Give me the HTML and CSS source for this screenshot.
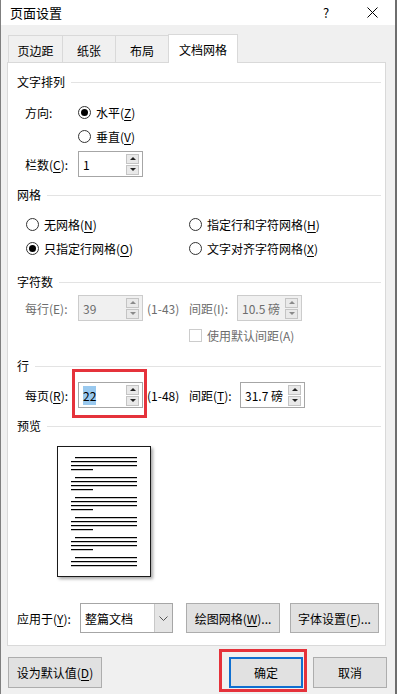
FILE: index.html
```html
<!DOCTYPE html>
<html lang="zh-CN">
<head>
    <meta charset="UTF-8">
    <meta name="viewport" content="width=device-width, initial-scale=1.0">
    <title>页面设置</title>
    <link rel="stylesheet" href="styles.css">
</head>
<body>
<div class="window">
    <div class="titlebar">
        <span class="title">页面设置</span>
        <span class="help">?</span>
        <svg class="close" width="11" height="11" viewBox="0 0 11 11"><path d="M0.5 0.5 L10.5 10.5 M10.5 0.5 L0.5 10.5" stroke="#000" stroke-width="1"/></svg>
    </div>

    <div class="tabs">
        <div class="tab t1">页边距</div>
        <div class="tab t2">纸张</div>
        <div class="tab t3">布局</div>
        <div class="tab t4 active">文档网格</div>
    </div>

    <div class="panel">
        <div class="hdr">文字排列</div>
        <div class="row r-dir">
            <span class="lbl">方向:</span>
            <span class="radio on"></span><span>水平(<u>Z</u>)</span>
        </div>
        <div class="row r-dir2">
            <span class="lbl"></span>
            <span class="radio"></span><span>垂直(<u>V</u>)</span>
        </div>
        <div class="row r-cols">
            <span class="lbl">栏数(<u>C</u>):</span>
            <div class="spin"><span class="val">1</span><span class="btns"><span class="sb"><i class="up"></i></span><span class="sb"><i class="dn"></i></span></span></div>
        </div>

        <div class="hdr h-grid">网格</div>
        <div class="grid-opts">
            <div class="opt"><span class="radio"></span><span>无网格(<u>N</u>)</span></div>
            <div class="opt"><span class="radio"></span><span>指定行和字符网格(<u>H</u>)</span></div>
            <div class="opt"><span class="radio on"></span><span>只指定行网格(<u>O</u>)</span></div>
            <div class="opt"><span class="radio"></span><span>文字对齐字符网格(<u>X</u>)</span></div>
        </div>

        <div class="hdr h-chars">字符数</div>
        <div class="row r-chars dim">
            <span class="lbl">每行(E):</span>
            <div class="spin off"><span class="val">39</span><span class="btns"><span class="sb"><i class="up"></i></span><span class="sb"><i class="dn"></i></span></span></div>
            <span class="range">(1-43)</span>
            <span class="lbl2">间距(I):</span>
            <div class="spin off"><span class="val">10.5 磅</span><span class="btns"><span class="sb"><i class="up"></i></span><span class="sb"><i class="dn"></i></span></span></div>
        </div>
        <div class="row r-check dim">
            <span class="check"></span><span>使用默认间距(A)</span>
        </div>

        <div class="hdr h-lines">行</div>
        <div class="row r-lines">
            <span class="lbl">每页(<u>R</u>):</span>
            <div class="spin marked"><span class="val"><span class="sel">22</span></span><span class="btns"><span class="sb"><i class="up"></i></span><span class="sb"><i class="dn"></i></span></span></div>
            <span class="range">(1-48)</span>
            <span class="lbl2 wide">间距(<u>T</u>):</span>
            <div class="spin"><span class="val">31.7 磅</span><span class="btns"><span class="sb"><i class="up"></i></span><span class="sb"><i class="dn"></i></span></span></div>
        </div>

        <div class="hdr h-prev">预览</div>
        <div class="preview">
            <div class="page">
                <div class="para"><b class="first"></b><b></b><b></b><b class="short"></b></div>
                <div class="para"><b class="first"></b><b></b><b></b><b class="short"></b></div>
                <div class="para"><b class="first"></b><b></b><b></b><b class="short"></b></div>
                <div class="para"><b class="first"></b><b></b><b></b><b class="short"></b></div>
                <div class="para"><b class="first"></b><b></b><b></b><b class="short"></b></div>
                <div class="para"><b class="first"></b><b></b><b></b></div>
            </div>
        </div>

        <div class="apply">
            <span class="lbl3">应用于(<u>Y</u>):</span>
            <div class="select">
                <span class="val">整篇文档</span>
                <span class="drop"><svg width="9" height="5" viewBox="0 0 9 5"><path d="M0.5 0.5 L4.5 4.5 L8.5 0.5" fill="none" stroke="#555" stroke-width="1"/></svg></span>
            </div>
            <div class="btn b-grid">绘图网格(<u>W</u>)...</div>
            <div class="btn b-font">字体设置(<u>F</u>)...</div>
        </div>
    </div>

    <div class="footer">
        <div class="btn b-default">设为默认值(<u>D</u>)</div>
        <div class="spacer"></div>
        <div class="btn b-ok">确定</div>
        <div class="btn b-cancel">取消</div>
    </div>
</div>
</body>
</html>
```

FILE: styles.css
```css
* {
    box-sizing: border-box;
}

body {
    margin: 0;
    background: #ffffff;
    font-family: "Noto Sans CJK SC", "Noto Sans", sans-serif;
    font-size: 12px;
    color: #000;
}

u {
    text-decoration: underline;
    text-underline-offset: 2px;
}

.window {
    width: 397px;
    height: 694px;
    background: #f0f0f0;
    border-left: 1px solid #7f7f7f;
    border-right: 2px solid #6e6e6e;
}

/* barre de titre */
.titlebar {
    height: 25px;
    background: #ffffff;
    display: flex;
    align-items: center;
    padding-left: 9px;
}

.title {
    font-size: 13px;
    flex: 1;
}

.help {
    font-size: 13px;
    width: 44px;
}

.close {
    margin-right: 17px;
}

/* onglets */
.tabs {
    display: flex;
    align-items: flex-end;
    padding: 9px 0 0 7px;
}

.tab {
    height: 27px;
    border: 1px solid #d9d9d9;
    border-bottom: none;
    margin-right: -1px;
    display: flex;
    align-items: center;
    justify-content: center;
    font-size: 12px;
    padding-top: 2px;
}

.t1 { width: 55px; }
.t2 { width: 54px; }
.t3 { width: 54px; }

.t4 {
    width: 70px;
}

.tab.active {
    height: 29px;
    background: #ffffff;
    margin-bottom: -1px;
    position: relative;
    z-index: 1;
    padding-top: 0;
}

.panel {
    margin-left: 6px;
    width: 379px;
    height: 584px;
    background: #ffffff;
    border: 1px solid #d9d9d9;
    padding: 11px 4px 0 9px;
}

/* titres de section */
.hdr {
    height: 16px;
    display: flex;
    align-items: center;
    gap: 6px;
    line-height: 16px;
}

.hdr::after {
    content: "";
    flex: 1;
    height: 1px;
    background: #e3e3e3;
    margin-top: 1px;
}

.h-grid { margin-top: 10px; }
.h-chars { margin-top: 14px; }
.h-lines { margin-top: 11px; }
.h-prev { margin-top: 10px; }

.row {
    display: flex;
    align-items: center;
    height: 24px;
    padding-left: 8px;
}

.r-dir { margin-top: 10px; }

.r-cols {
    height: 26px;
    margin-top: 3px;
}

.r-chars {
    height: 26px;
    margin-top: 5px;
}

.r-check {
    margin-top: 2px;
    padding-left: 172px;
}

.r-lines {
    height: 26px;
    margin-top: 8px;
}

.lbl {
    width: 53px;
}

.lbl2 {
    width: 48px;
}

.lbl2.wide {
    width: 51px;
}

.range {
    width: 46px;
    padding-left: 4px;
}

.dim {
    color: #6d6d6d;
}

/* boutons radio */
.radio {
    width: 13px;
    height: 13px;
    border: 1px solid #333;
    border-radius: 50%;
    margin-right: 5px;
    display: flex;
    align-items: center;
    justify-content: center;
    background: #fff;
}

.radio.on::after {
    content: "";
    width: 7px;
    height: 7px;
    border-radius: 50%;
    background: #000;
}

.check {
    width: 13px;
    height: 13px;
    border: 1px solid #cccccc;
    margin-right: 5px;
}

.grid-opts {
    display: grid;
    grid-template-columns: 163px 1fr;
    grid-auto-rows: 24px;
    margin-top: 9px;
    padding-left: 9px;
}

.opt {
    display: flex;
    align-items: center;
}

/* champs numériques */
.spin {
    width: 65px;
    height: 26px;
    border: 1px solid #a6a6a6;
    background: #fff;
    display: flex;
    align-items: center;
    padding: 0 3px 0 4px;
    color: #000;
}

.spin.off {
    background: #f0f0f0;
    border-color: #cccccc;
    color: #6d6d6d;
}

.spin .val {
    flex: 1;
    font-size: 12px;
    white-space: nowrap;
}

.sel {
    background: #99c9ef;
    padding: 1px 0;
}

.btns {
    display: flex;
    flex-direction: column;
    gap: 1px;
}

.sb {
    width: 13px;
    height: 10px;
    background: #e9e9e9;
    border: 1px solid #c4c4c4;
    display: flex;
    align-items: center;
    justify-content: center;
}

.up {
    width: 0;
    height: 0;
    border-left: 3px solid transparent;
    border-right: 3px solid transparent;
    border-bottom: 3px solid #222;
}

.dn {
    width: 0;
    height: 0;
    border-left: 3px solid transparent;
    border-right: 3px solid transparent;
    border-top: 3px solid #222;
}

.off .up { border-bottom-color: #8a8a8a; }
.off .dn { border-top-color: #8a8a8a; }

.marked {
    position: relative;
}

.marked::after {
    content: "";
    position: absolute;
    left: -7px;
    top: -14px;
    right: -5px;
    bottom: -11px;
    border: 3px solid #e5323b;
}

/* aperçu */
.preview {
    height: 169px;
    padding: 12px 0 0 40px;
}

.page {
    width: 94px;
    height: 131px;
    border: 1px solid #1a1a1a;
    background: #fff;
    box-shadow: 2px 2px 3px rgba(0, 0, 0, 0.35);
    padding: 10px 0 0 13px;
}

.para {
    display: flex;
    flex-direction: column;
    gap: 3px;
    margin-bottom: 7px;
}

.para b {
    display: block;
    width: 66px;
    height: 1px;
    background: #000;
    box-shadow: 0 0.5px 0 rgba(0, 0, 0, 0.45);
}

.para b.first {
    width: 62px;
    margin-left: 4px;
}

.para b.short {
    width: 22px;
}

/* ligne "appliquer à" */
.apply {
    display: flex;
    align-items: center;
    height: 30px;
}

.lbl3 {
    width: 63px;
}

.select {
    width: 93px;
    height: 30px;
    border: 1px solid #a6a6a6;
    display: flex;
    align-items: center;
    margin-right: 13px;
}

.select .val {
    flex: 1;
    padding-left: 4px;
}

.drop {
    width: 18px;
    height: 28px;
    background: #e5e5e5;
    border-left: 1px solid #c8c8c8;
    display: flex;
    align-items: center;
    justify-content: center;
}

.btn {
    height: 30px;
    background: #e1e1e1;
    border: 1px solid #adadad;
    display: flex;
    align-items: center;
    justify-content: center;
    white-space: nowrap;
}

.b-grid {
    width: 94px;
    margin-right: 10px;
}

.b-font {
    width: 89px;
}

/* pied */
.footer {
    display: flex;
    align-items: center;
    padding: 11px 8px 0 7px;
}

.footer .btn {
    height: 31px;
}

.spacer {
    flex: 1;
}

.b-default {
    width: 94px;
}

.b-ok {
    width: 74px;
    border: 2px solid #0f6fd0;
    margin-right: 10px;
    position: relative;
}

.b-ok::after {
    content: "";
    position: absolute;
    left: -12px;
    top: -10px;
    right: -6px;
    bottom: -6px;
    border: 3px solid #e5323b;
}

.b-cancel {
    width: 74px;
}
```
